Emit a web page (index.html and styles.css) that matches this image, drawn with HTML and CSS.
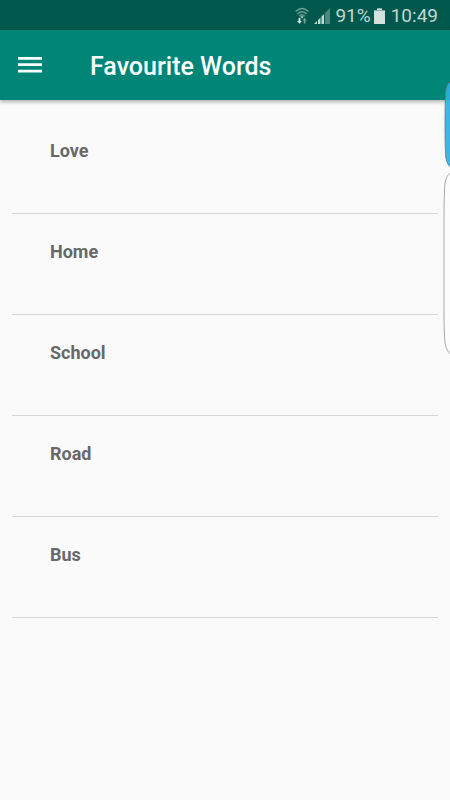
FILE: index.html
```html
<!DOCTYPE html>
<html lang="en">
<head>
<meta charset="utf-8">
<meta name="viewport" content="width=device-width, initial-scale=1">
<title>Favourite Words</title>
<link rel="stylesheet" href="styles.css">
</head>
<body>
<div class="status-bar">
  <svg class="icon-wifi" width="14" height="18" viewBox="0 0 14 18" aria-hidden="true">
    <g fill="none" stroke="#6da197" stroke-width="1.4">
      <path d="M.6 4.6Q7-1.4 13.4 4.6"/>
      <path d="M2.4 7Q7 2.6 11.6 7"/>
      <path d="M4.2 9.2Q7 6.4 9.8 9.2"/>
    </g>
    <path d="M5.3 9.6Q7 8.2 8.7 9.6L7 11.8Z" fill="#a5c5be"/>
    <path d="M3.6 11h1.8v3h1.5l-2.4 2.8L2.1 14h1.5z" fill="#e6efed"/>
    <path d="M8.8 16.4h1.6v-3h1.4L9.6 10.8 7.4 13.4h1.4z" fill="#6da197"/>
  </svg>
  <svg class="icon-signal" width="16" height="16" viewBox="0 0 16 16" aria-hidden="true">
    <path d="M0 16L3 13V16zM4 12L6.5 9.5V16H4zM7.5 8.5L10 6V16H7.5z" fill="#c3d7d3"/>
    <path d="M11 5L16 0V16H11z" fill="#4c887d"/>
  </svg>
  <span class="battery-level">91%</span>
  <svg class="icon-battery" width="11" height="16" viewBox="0 0 11 16" aria-hidden="true">
    <path d="M3 0h5v2h3v14H0V2h3z" fill="#d3e2df"/>
    <path d="M3 0h5v1H3zM0 2h11v1H0z" fill="#84aca4"/>
  </svg>
  <time class="clock">10:49</time>
</div>
<header class="app-bar">
  <button class="menu-button" type="button" aria-label="Open menu">
    <svg width="24" height="18" viewBox="0 0 24 18" aria-hidden="true">
      <path d="M0 1h24v2.7H0zM0 7.2h24v2.7H0zM0 13.8h24v2.7H0z" fill="#fff"/>
    </svg>
  </button>
  <h1 class="title">Favourite Words</h1>
</header>
<main>
  <ul class="word-list">
    <li class="word">Love</li>
    <li class="word">Home</li>
    <li class="word">School</li>
    <li class="word">Road</li>
    <li class="word">Bus</li>
  </ul>
</main>
<svg class="edge-handle" width="7" height="276" viewBox="0 0 7 276" aria-hidden="true">
  <path d="M7.5 1Q4 2 2.8 10Q2 18 2 43T2.8 76Q4 84 7.5 86Z" fill="#2eb0e6" fill-opacity=".92" stroke="#68737a" stroke-width=".8"/>
  <path d="M7.5 92Q3.5 94 2 102Q1 112 1 140V230Q1 252 2 262Q3.5 270 7.5 273Z" fill="#fcfcfc" stroke="#929292" stroke-width=".8"/>
</svg>
</body>
</html>
```
FILE: styles.css
```css
* {
  box-sizing: border-box;
}

body {
  margin: 0;
  min-height: 100vh;
  background: #fafafa;
  font-family: Roboto, "Liberation Sans", sans-serif;
}

.status-bar {
  display: flex;
  align-items: center;
  justify-content: flex-end;
  height: 30px;
  padding: 1px 12px 0;
  background: #00574b;
  color: #c3d7d3;
  font-size: 19px;
  line-height: 29px;
}

.icon-wifi {
  margin-right: 5px;
}

.icon-signal {
  margin-right: 5px;
}

.icon-battery {
  margin: 0 6px 0 3px;
}

.app-bar {
  display: flex;
  align-items: center;
  height: 70px;
  background: #008577;
  color: #fff;
  box-shadow: 0 2px 4px rgba(0, 0, 0, 0.3);
}

.menu-button {
  display: flex;
  align-items: center;
  justify-content: center;
  width: 60px;
  height: 70px;
  padding: 0;
  border: 0;
  background: none;
  cursor: pointer;
}

.title {
  margin: 0 0 0 30px;
  padding-top: 4px;
  font-size: 25px;
  font-weight: 500;
  line-height: 32px;
}

.word-list {
  margin: 0;
  padding: 13px 12px;
  list-style: none;
}

.word {
  height: 101px;
  padding: 26px 38px;
  border-bottom: 1px solid #d6d6d6;
  color: #686868;
  font-size: 18px;
  font-weight: 700;
  line-height: 24px;
}

/* Overlay tab docked to the screen edge */
.edge-handle {
  position: absolute;
  top: 81px;
  right: 0;
}
```
